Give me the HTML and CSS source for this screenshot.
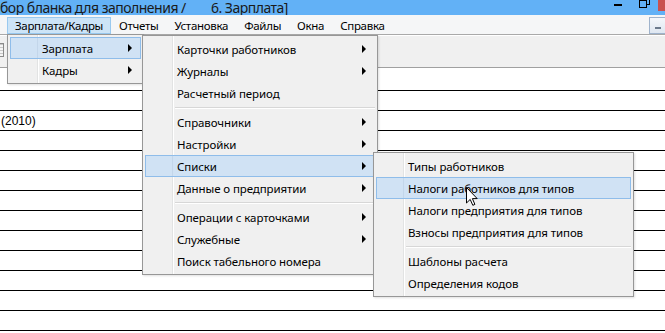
FILE: index.html
```html
<!DOCTYPE html>
<html lang="ru">
<head>
    <meta charset="UTF-8">
    <title>Зарплата</title>
    <link rel="stylesheet" href="styles.css">
</head>
<body>
    <div class="window">
        <div class="titlebar">
            <span class="title">бор бланка для заполнения /        6. Зарплата]</span>
            <div class="caption-buttons">
                <span class="cap-min"></span>
                <span class="cap-restore"><span class="back"></span><span class="front"></span></span>
                <span class="cap-close"></span>
            </div>
        </div>

        <div class="menubar">
            <span class="menubar-item active">Зарплата/Кадры</span>
            <span class="menubar-item">Отчеты</span>
            <span class="menubar-item">Установка</span>
            <span class="menubar-item">Файлы</span>
            <span class="menubar-item">Окна</span>
            <span class="menubar-item">Справка</span>
            <span class="mdi-min"></span>
        </div>

        <div class="toolbar">
            <span class="tool-icon"></span>
        </div>

        <div class="grid">
            <div class="row"></div>
            <div class="row"></div>
            <div class="row"><span class="cell">(2010)</span></div>
            <div class="row"></div>
            <div class="row"></div>
            <div class="row"></div>
            <div class="row"></div>
            <div class="row"></div>
            <div class="row"></div>
            <div class="row"></div>
            <div class="row"></div>
            <div class="row"></div>
            <div class="row"></div>
        </div>
    </div>

    <!-- Зарплата/Кадры dropdown -->
    <div class="menu menu-top">
        <div class="menu-item hot"><span class="label">Зарплата</span><span class="arrow"></span></div>
        <div class="menu-item"><span class="label">Кадры</span><span class="arrow"></span></div>
    </div>

    <!-- Зарплата submenu -->
    <div class="menu menu-salary">
        <div class="menu-item"><span class="label">Карточки работников</span><span class="arrow"></span></div>
        <div class="menu-item"><span class="label">Журналы</span><span class="arrow"></span></div>
        <div class="menu-item"><span class="label">Расчетный период</span></div>
        <div class="menu-sep"></div>
        <div class="menu-item"><span class="label">Справочники</span><span class="arrow"></span></div>
        <div class="menu-item"><span class="label">Настройки</span><span class="arrow"></span></div>
        <div class="menu-item hot"><span class="label">Списки</span><span class="arrow"></span></div>
        <div class="menu-item"><span class="label">Данные о предприятии</span><span class="arrow"></span></div>
        <div class="menu-sep"></div>
        <div class="menu-item"><span class="label">Операции с карточками</span><span class="arrow"></span></div>
        <div class="menu-item"><span class="label">Служебные</span><span class="arrow"></span></div>
        <div class="menu-item"><span class="label">Поиск табельного номера</span></div>
    </div>

    <!-- Списки submenu -->
    <div class="menu menu-lists">
        <div class="menu-item"><span class="label">Типы работников</span></div>
        <div class="menu-item hot"><span class="label">Налоги работников для типов</span></div>
        <div class="menu-item"><span class="label">Налоги предприятия для типов</span></div>
        <div class="menu-item"><span class="label">Взносы предприятия для типов</span></div>
        <div class="menu-sep"></div>
        <div class="menu-item"><span class="label">Шаблоны расчета</span></div>
        <div class="menu-item"><span class="label">Определения кодов</span></div>
    </div>

    <svg class="cursor" width="12" height="19" viewBox="0 0 12 19">
        <path d="M0.5 0.5 L0.5 16 L4.2 12.4 L6.8 18.3 L8.9 17.4 L6.4 11.6 L11.2 11.6 Z" fill="#fff" stroke="#000" stroke-width="1"/>
    </svg>
</body>
</html>
```

FILE: styles.css
```css
* {
    box-sizing: border-box;
    margin: 0;
    padding: 0;
}

body {
    width: 665px;
    height: 333px;
    overflow: hidden;
    position: relative;
    background: #fff;
    font-family: "Noto Sans", "Liberation Sans", sans-serif;
    font-size: 12px;
    color: #000;
}

.window {
    display: flex;
    flex-direction: column;
}

/* Title bar */
.titlebar {
    height: 15px;
    background-color: #62b1f6;
    display: flex;
    justify-content: space-between;
    overflow: hidden;
}

.title {
    font-size: 14px;
    line-height: 15px;
    letter-spacing: -0.5px;
    white-space: pre;
    color: #1a1a1a;
}

.caption-buttons {
    display: flex;
    align-items: flex-start;
}

.cap-min {
    width: 8px;
    height: 2px;
    background: #000;
    margin: 4px 17px 0 0;
}

.cap-restore {
    width: 11px;
    height: 8px;
    margin-right: 8px;
    position: relative;
}

.cap-restore .back {
    position: absolute;
    right: 0;
    top: -3px;
    width: 8px;
    height: 8px;
    border: 1px solid #000;
}

.cap-restore .front {
    position: absolute;
    left: 0;
    bottom: 0;
    width: 8px;
    height: 8px;
    border: 1px solid #000;
    background: #62b1f6;
}

.cap-close {
    width: 7px;
    height: 11px;
    background: #c9514f;
}

/* Menu bar */
.menubar {
    height: 20px;
    background: #f5f6f7;
    border-bottom: 1px solid #a9a9a9;
    display: flex;
    align-items: flex-start;
    padding: 2px 0 0 7px;
    font-size: 11.5px;
    letter-spacing: -0.3px;
}

.menubar-item {
    height: 17px;
    line-height: 15px;
    padding: 0 7px;
    border: 1px solid transparent;
}

.menubar-item.active {
    background: #cce4f7;
    border-color: #99c9ef;
}

.mdi-min {
    margin-left: auto;
    width: 16px;
    height: 17px;
    border: 1px solid #9fb3cc;
    border-right: none;
    background: linear-gradient(#f4f7fb, #dfe7f1);
    display: flex;
    justify-content: center;
    align-items: flex-end;
    padding-bottom: 4px;
}

.mdi-min::after {
    content: "";
    width: 6px;
    height: 2px;
    background: #6b7a8c;
}

/* Toolbar */
.toolbar {
    height: 33px;
    background: #f0f0f0;
    border-top: 1px solid #fff;
    border-bottom: 1px solid #a0a0a0;
    padding-top: 7px;
}

.tool-icon {
    display: block;
    width: 4px;
    height: 14px;
    border: 1px solid #8a8a8a;
    border-left: none;
    background: repeating-linear-gradient(#c8c8c8 0 1px, #f4f4f4 1px 3px);
}

/* Grid of rows */
.grid {
    padding-top: 3px;
}

.row {
    height: 20px;
    border-bottom: 1px solid #000;
    display: flex;
    align-items: center;
}

.cell {
    font-family: "Liberation Sans", Arial, sans-serif;
    font-size: 12px;
    padding-left: 1px;
    color: #000;
}

/* Popup menus */
.menu {
    position: absolute;
    background:
        linear-gradient(to right, transparent 29px, #e2e3e3 29px, #e2e3e3 30px, #fff 30px, #fff 31px, transparent 31px),
        #f0f0f0;
    border: 1px solid #979797;
    padding: 2px;
    font-size: 11.5px;
    letter-spacing: -0.1px;
    box-shadow: 1px 1px 2px rgba(0, 0, 0, 0.12);
}

.menu-top {
    left: 7px;
    top: 34px;
    width: 137px;
}

.menu-salary {
    left: 142px;
    top: 35px;
    width: 236px;
}

.menu-lists {
    left: 373px;
    top: 152px;
    width: 261px;
}

.menu-item {
    height: 22px;
    display: flex;
    align-items: center;
    padding-left: 31px;
    padding-right: 8px;
    border: 1px solid transparent;
    white-space: nowrap;
}

.menu-item.hot {
    border-color: #8fbdea;
    background:
        linear-gradient(to right, transparent 26px, #c3d6ea 26px, #c3d6ea 27px, transparent 27px),
        #d0e2f4;
}

.menu-item .label {
    flex: 1;
}

.arrow {
    width: 0;
    height: 0;
    border-top: 4px solid transparent;
    border-bottom: 4px solid transparent;
    border-left: 4px solid #000;
}

.menu-sep {
    height: 7px;
    margin-left: 30px;
    padding-top: 3px;
}

.menu-sep::before {
    content: "";
    display: block;
    height: 1px;
    background: #d7d7d7;
    border-bottom: 1px solid #fff;
    box-sizing: content-box;
}

/* Mouse pointer */
.cursor {
    position: absolute;
    left: 466px;
    top: 187px;
}
```
